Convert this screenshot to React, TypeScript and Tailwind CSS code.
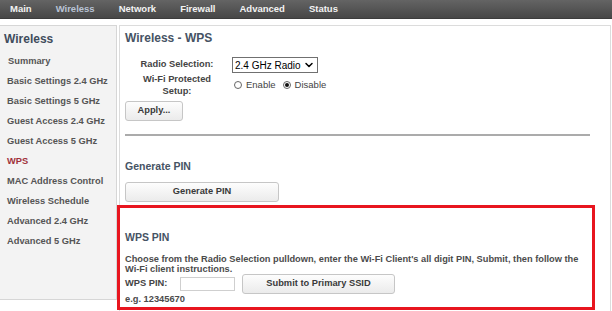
import { ChevronDown } from 'lucide-react';

const navItems = ['Main', 'Wireless', 'Network', 'Firewall', 'Advanced', 'Status'];

const sideItems = [
  'Summary',
  'Basic Settings 2.4 GHz',
  'Basic Settings 5 GHz',
  'Guest Access 2.4 GHz',
  'Guest Access 5 GHz',
  'WPS',
  'MAC Address Control',
  'Wireless Schedule',
  'Advanced 2.4 GHz',
  'Advanced 5 GHz',
];

function Radio({ checked, label }: { checked?: boolean; label: string }) {
  return (
    <span className="flex items-center">
      <span className="w-[8px] h-[8px] rounded-full border border-[#666] bg-white flex items-center justify-center">
        {checked && <span className="w-[4px] h-[4px] rounded-full bg-[#111]" />}
      </span>
      <span className="ml-[4px]">{label}</span>
    </span>
  );
}

function GrayButton({ label, className }: { label: string; className: string }) {
  return (
    <button
      className={`h-[20px] rounded-[3px] border border-[#c6c6c6] bg-linear-to-b from-[#fdfdfd] to-[#ebebeb] text-[9.3px] font-bold text-[#3a3a3a] whitespace-nowrap ${className}`}>
      {label}
    </button>
  );
}

export default function App() {
  return (
    <div className="relative w-[612px] h-[311px] overflow-hidden bg-white font-['Liberation_Sans',Arial,sans-serif]">
      {/* Top nav */}
      <div className="h-[19px] bg-linear-to-b from-[#646464] to-[#474747] border-b border-[#3c3c3c] flex items-center pl-[10px] gap-[24px] text-[9.5px] font-bold text-[#f3f3f3]">
        {navItems.map((n) => (
          <span key={n} className={n === 'Wireless' ? 'text-[#b9c4d6]' : ''}>
            {n}
          </span>
        ))}
      </div>

      <div className="flex mt-[6px]">
        {/* Sidebar */}
        <div className="w-[117px] h-[275px] border border-l-0 border-[#d6d6d6] bg-[#f3f3f3] pt-[6px]">
          <div className="pl-[4px] text-[12px] leading-[14px] font-bold text-[#3f4c5c]">Wireless</div>
          <div className="mt-[6px]">
            {sideItems.map((s, i) => (
              <div
                key={s}
                className={`h-[20px] flex items-center text-[9.3px] font-bold whitespace-nowrap ${
                  i === 0 ? 'pl-[8px]' : 'pl-[7px]'
                } ${s === 'WPS' ? 'text-[#a0303a]' : 'text-[#555]'}`}>
                {s}
              </div>
            ))}
          </div>
        </div>

        {/* Content */}
        <div className="ml-[2px] w-[492px] h-[286px] border border-b-0 border-[#dcdcdc] pl-[5px] pt-[5px] flex flex-col">
          <div className="text-[12px] leading-[14px] font-bold text-[#465364]">Wireless - WPS</div>

          <div className="ml-[7px] mt-[12px] grid grid-cols-[90px_auto] gap-x-[10px] text-[9.3px]">
            <div className="h-[16px] flex items-center justify-center font-bold text-[#444]">Radio Selection:</div>
            <div className="w-[86px] h-[16px] border border-[#707070] bg-white flex items-center justify-between pl-[2px] pr-[2px] text-[10px] text-black whitespace-nowrap">
              <span>2.4 GHz Radio</span>
              <ChevronDown size={12} strokeWidth={3} />
            </div>
            <div className="text-center leading-[12px] font-bold text-[#444]">
              Wi-Fi Protected
              <br />
              Setup:
            </div>
            <div className="flex items-center gap-[7px] ml-[2px] text-[9.5px] text-[#444]">
              <Radio label="Enable" />
              <Radio checked label="Disable" />
            </div>
          </div>

          <GrayButton label="Apply..." className="mt-[4px] w-[58px]" />

          <div className="mt-[13px] w-[465px] h-[2px] bg-[#ababab]" />

          <div className="mt-[24px] text-[10.5px] leading-[13px] font-bold text-[#465364]">Generate PIN</div>
          <GrayButton label="Generate PIN" className="mt-[9px] w-[154px]" />

          <div className="mt-[29px] text-[10.5px] leading-[13px] font-bold text-[#465364]">WPS PIN</div>
          <p className="mt-[10px] text-[9.25px] leading-[10px] font-bold text-[#4b4b4b] whitespace-nowrap">
            Choose from the Radio Selection pulldown, enter the Wi-Fi Client's all digit PIN, Submit, then follow the
            <br />
            Wi-Fi client instructions.
          </p>
          <div className="h-[20px] flex items-center text-[9.3px] font-bold text-[#444]">
            <span className="w-[55px]">WPS PIN:</span>
            <span className="w-[55px] h-[14px] border border-[#cfcfcf] bg-white" />
            <GrayButton label="Submit to Primary SSID" className="ml-[7px] w-[153px]" />
          </div>
          <div className="text-[9.3px] leading-[10px] font-bold text-[#4b4b4b]">e.g. 12345670</div>
        </div>
      </div>

      {/* annotation highlight */}
      <div className="absolute left-[117px] top-[205px] w-[478px] h-[105px] border-[3px] border-[#e8151f]" />
    </div>
  );
}
